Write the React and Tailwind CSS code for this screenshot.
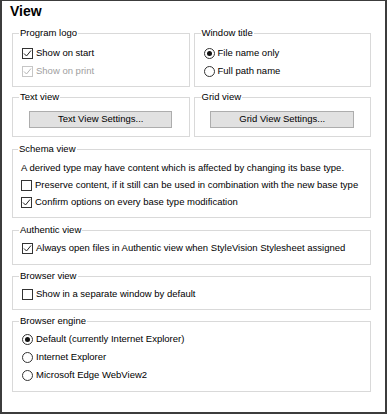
const Check = ({ checked, disabled }) => (
  <span
    className={
      disabled
        ? 'flex h-[11px] w-[11px] shrink-0 items-center justify-center border border-[#c6c6c6] bg-white'
        : 'flex h-[11px] w-[11px] shrink-0 items-center justify-center border border-[#333333] bg-white'
    }
  >
    {checked && (
      <svg width="9" height="9" viewBox="0 0 9 9">
        <path d="M1 4.5 L3.5 7 L8 1.5" fill="none" stroke={disabled ? '#b4b4b4' : '#222'} strokeWidth="1" />
      </svg>
    )}
  </span>
);

const Radio = ({ checked }) => (
  <span className="flex h-[11px] w-[11px] shrink-0 items-center justify-center rounded-full border border-[#333333] bg-white">
    {checked && <span className="h-[5px] w-[5px] rounded-full bg-[#111]" />}
  </span>
);

const Row = ({ children, className = 'flex h-[18px] items-center gap-[3px]' }) => (
  <div className={className}>{children}</div>
);

const Group = ({ title, className, children }) => (
  <fieldset className={className}>
    <legend className="-ml-[3px] px-[1px] leading-[12px]">{title}</legend>
    {children}
  </fieldset>
);

const App = () => {
  return (
    <div
      className="h-[415px] w-[388px] bg-white text-[9.5px] text-black"
      style={{ fontFamily: '"Liberation Sans", Arial, sans-serif' }}
    >
      <div className="h-[414px] w-[387px] border-t border-b-2 border-x-2 border-[#3c3c3c]">
        <h1 className="pl-[8px] pt-[2px] text-[14px] font-bold leading-[16px]">View</h1>

        <div className="ml-[10px] mt-[8px] flex w-[359px] flex-col">
          {/* logo / window title */}
          <div className="grid grid-cols-2 gap-x-[4px]">
            <Group title="Program logo" className="border border-[#d9d9d9] px-[9px] pt-[5px] pb-[6px]">
              <Row>
                <Check checked />
                <span>Show on start</span>
              </Row>
              <Row>
                <Check checked disabled />
                <span className="text-[#a0a0a0]">Show on print</span>
              </Row>
            </Group>
            <Group title="Window title" className="border border-[#d9d9d9] px-[9px] pt-[5px] pb-[6px]">
              <Row>
                <Radio checked />
                <span>File name only</span>
              </Row>
              <Row>
                <Radio />
                <span>Full path name</span>
              </Row>
            </Group>
          </div>

          {/* settings buttons */}
          <div className="mt-[4px] grid grid-cols-2 gap-x-[4px]">
            <Group title="Text view" className="border border-[#d9d9d9] px-[9px] pt-[8px] pb-[8px]">
              <button className="mx-auto flex h-[17px] w-[143px] items-center justify-center border border-[#adadad] bg-[#e1e1e1]">
                Text View Settings...
              </button>
            </Group>
            <Group title="Grid view" className="border border-[#d9d9d9] px-[9px] pt-[8px] pb-[8px]">
              <button className="mx-auto flex h-[17px] w-[144px] items-center justify-center border border-[#adadad] bg-[#e1e1e1]">
                Grid View Settings...
              </button>
            </Group>
          </div>

          <Group title="Schema view" className="mt-[6px] border border-[#d9d9d9] px-[8px] pt-[5px] pb-[6px]">
            <Row className="flex h-[17px] items-center">
              <span>A derived type may have content which is affected by changing its base type.</span>
            </Row>
            <Row className="flex h-[17px] items-center gap-[3px]">
              <Check />
              <span>Preserve content, if it still can be used in combination with the new base type</span>
            </Row>
            <Row className="flex h-[17px] items-center gap-[3px]">
              <Check checked />
              <span>Confirm options on every base type modification</span>
            </Row>
          </Group>

          <Group title="Authentic view" className="mt-[6px] border border-[#d9d9d9] px-[9px] pt-[3px] pb-[7px]">
            <Row>
              <Check checked />
              <span>Always open files in Authentic view when StyleVision Stylesheet assigned</span>
            </Row>
          </Group>

          <Group title="Browser view" className="mt-[5px] border border-[#d9d9d9] px-[9px] pt-[3px] pb-[6px]">
            <Row>
              <Check />
              <span>Show in a separate window by default</span>
            </Row>
          </Group>

          <Group title="Browser engine" className="mt-[5px] border border-[#d9d9d9] px-[9px] pt-[3px] pb-[7px]">
            <Row>
              <Radio checked />
              <span>Default (currently Internet Explorer)</span>
            </Row>
            <Row>
              <Radio />
              <span>Internet Explorer</span>
            </Row>
            <Row>
              <Radio />
              <span>Microsoft Edge WebView2</span>
            </Row>
          </Group>
        </div>
      </div>
    </div>
  );
};

export default App;
